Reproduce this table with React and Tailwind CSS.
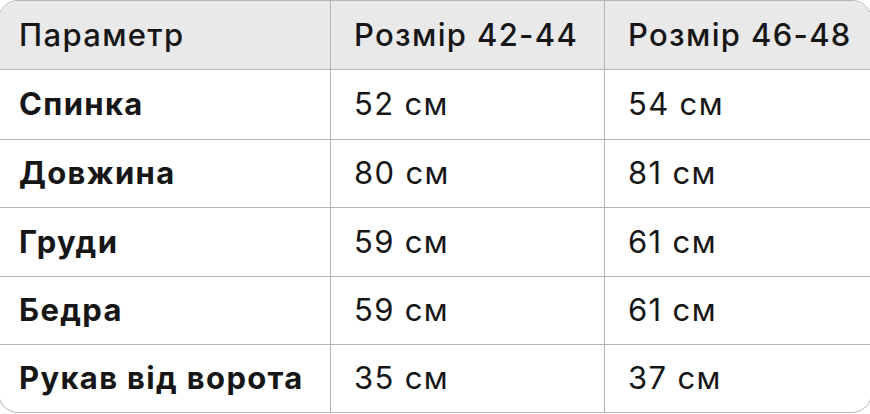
const rows = [
	["Спинка", "52 см", "54 см", "h-[70px]"],
	["Довжина", "80 см", "81 см", "h-[68px]"],
	["Груди", "59 см", "61 см", "h-[69px]"],
	["Бедра", "59 см", "61 см", "h-[68px]"],
	["Рукав від ворота", "35 см", "37 см", "h-[67px]"],
];

const App = () => {
	return (
		<div className="w-[870px] h-[414px] bg-white overflow-hidden">
			<div
				className="w-[874px] ml-[-2px] border border-[#b4b4b4] rounded-[20px] overflow-hidden text-[#161616] tracking-[0.084em]"
				style={{ fontFamily: "Inter, 'Noto Sans', sans-serif" }}
			>
				<div className="grid grid-cols-[332px_274px_1fr] h-[69px] bg-[#e9e9e9] border-b border-[#b4b4b4] text-[31px] font-medium">
					<div className="flex items-center pl-[20px] border-r border-[#b4b4b4]">Параметр</div>
					<div className="flex items-center pl-[23px] border-r border-[#b4b4b4]">Розмір 42-44</div>
					<div className="flex items-center pl-[23px]">Розмір 46-48</div>
				</div>
				{rows.map((row, idx) => (
					<div
						key={row[0]}
						className={
							"grid grid-cols-[332px_274px_1fr] text-[31px] " +
							row[3] +
							(idx < rows.length - 1 ? " border-b border-[#b4b4b4]" : "")
						}
					>
						<div className="flex items-center pl-[20px] font-bold border-r border-[#b4b4b4]">{row[0]}</div>
						<div className="flex items-center pl-[23px] border-r border-[#b4b4b4]">{row[1]}</div>
						<div className="flex items-center pl-[23px]">{row[2]}</div>
					</div>
				))}
			</div>
		</div>
	);
};

export default App;
